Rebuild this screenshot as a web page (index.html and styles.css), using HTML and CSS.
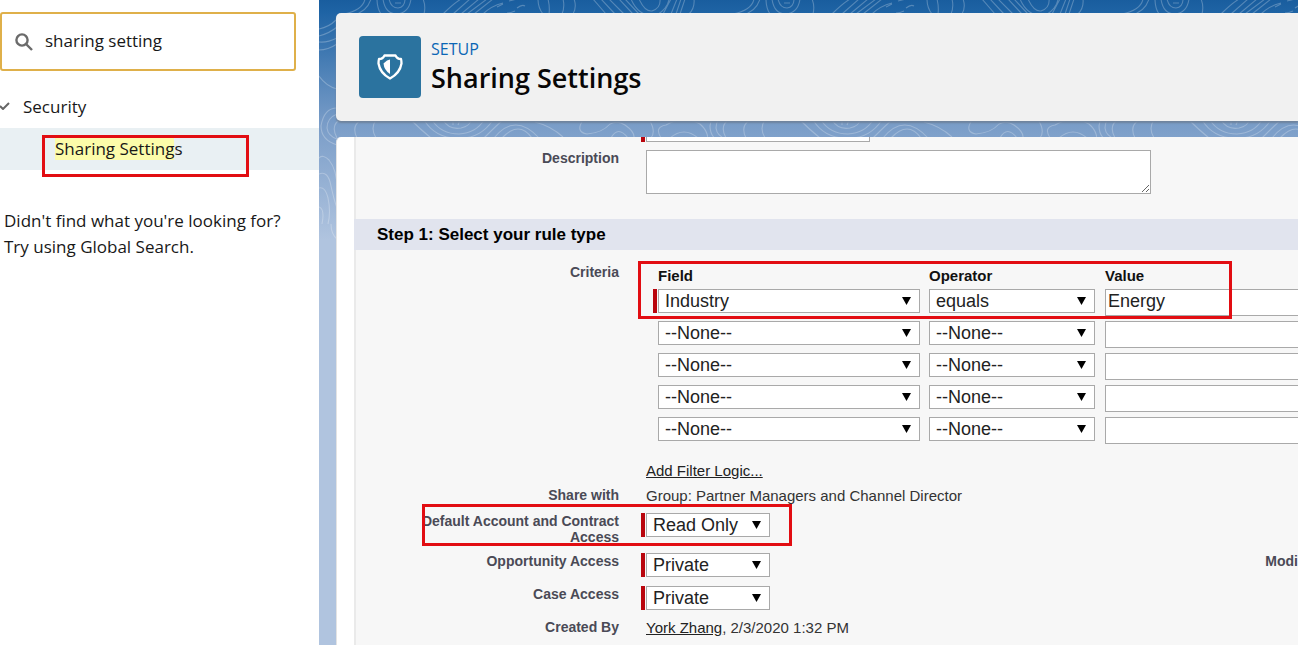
FILE: index.html
```html
<!DOCTYPE html>
<html lang="en">
<head>
<meta charset="utf-8">
<title>Sharing Settings</title>
<link rel="stylesheet" href="styles.css">
</head>
<body>
<div class="app">
  <aside class="sidebar">
    <label class="search">
      <svg class="search-icon" viewBox="0 0 18 18" aria-hidden="true"><circle cx="7" cy="7" r="5.6"/><path d="M11 11l6 6"/></svg>
      <input class="search-input" type="text" value="sharing setting" aria-label="Quick find">
    </label>
    <nav class="tree">
      <button class="tree-group" type="button">
        <svg class="chevron" viewBox="0 0 10 8" aria-hidden="true"><path d="M0 4l3 3 6-6"/></svg>Security
      </button>
      <div class="tree-item">
        <a class="tree-link" href="#"><mark>Sharing Setting</mark>s</a>
        <span class="callout callout-nav"></span>
      </div>
    </nav>
    <p class="hint">Didn't find what you're looking for?<br>Try using Global Search.</p>
  </aside>

  <main class="main">
    <svg class="contours" aria-hidden="true">
      <defs>
        <pattern id="topo" width="389" height="260" patternUnits="userSpaceOnUse">
          <g fill="none" stroke="#fff" stroke-width="1.1">
            <path d="M25 14Q44 10 46-1M34 15Q48 12 52-1M58-1Q58 8 62 14M64-1Q66 14 78 14 90 13 92-1M70-1Q72 8 79 8 86 7 86-1M76 3h6M104-1Q107 6 105 14"/>
            <path d="M124 14Q134 4 142-1M134 14L151-1M142 14L160-1M148 14L168-1M155 14L174-1M164 14Q172 6 184 3M178 7l6-3M190 1l8-2M188 13q4 0 8-2M198 8q5-4 8-2M219-1Q219 8 224 14M229-1Q231 7 230 14M244-1Q246 7 243 14M255-1Q258 7 254 14"/>
            <path d="M274-1L287 14M282-1L296 14M290-1L305 14M300-1L314 14M306-1L320 14M312-1Q320 18 338 15 349 8 350-1M320-1Q326 12 333 11 342 8 341-1M352-1L344 14M358-1L352 14M362-1L357 14M366-1L361 14M375-1Q376 8 370 14"/>
            <path d="M0 29Q10 27 17 20M0 36Q11 33 18 27M0 42Q8 43 18 38M0 50Q9 50 18 44M0 76Q7 86 18 89M18 108Q5 108 2 126 2 140 18 145M18 114Q8 118 8 128 9 136 18 139M0 158Q4 154 10 160 18 170 18 188M0 174Q9 170 12 186 15 200 18 208M0 188Q6 186 9 198 12 212 9 224M0 207Q6 209 3 224M12 224Q12 234 18 239"/>
            <path d="M18 138Q12 127 19 121M38 138Q32 126 42 120M57 138Q51 128 57 120M92 120Q101 129 112 138M105 120Q117 139 140 138 161 139 174 120M113 120Q122 134 140 134 157 133 165 120M124 120Q130 130 142 128 151 126 152 120M134 120v5M141 120l-2 5M175 138Q196 112 220 138M183 138Q200 120 213 138M165 138Q179 124 184 120M216 122Q232 126 244 137M264 120Q256 132 268 134 283 133 291 124 299 120 306 125 316 132 315 138M292 138Q299 125 309 138M342 138Q335 127 347 125 364 115 381 124 388 130 389 138M351 138Q365 126 379 138M331 121Q337 132 332 138"/>
          </g>
        </pattern>
      </defs>
      <rect width="100%" height="260" fill="url(#topo)"/>
    </svg>

    <header class="page-header">
      <span class="page-icon">
        <svg viewBox="0 0 28 28" aria-hidden="true"><path class="shield-line" d="M8.500 2.500h11q1.500 3.500 5.500 3.500.5 2 .5 4.500Q24 20 14 25.500 4 20 2.500 10.500q0-2.500.5-4.500 4 0 5.500-3.500z"/><path class="shield-fill" d="M14 6.500v14.500Q8 17 7.500 10.500L11 7.500z"/></svg>
      </span>
      <div>
        <div class="eyebrow">SETUP</div>
        <h1 class="title">Sharing Settings</h1>
      </div>
    </header>

    <section class="panel">
      <form class="form">
        <div class="row row-name">
          <span></span>
          <span class="required"><input class="text-input name-input" type="text" aria-label="Rule name"></span>
        </div>
        <div class="row row-description">
          <label class="label" for="desc">Description</label>
          <div><textarea class="description" id="desc"></textarea></div>
        </div>

        <h2 class="step">Step 1: Select your rule type</h2>

        <div class="row">
          <span class="label">Criteria</span>
          <div class="criteria">
            <table class="criteria-table">
              <colgroup><col class="col-field"><col class="col-operator"><col></colgroup>
              <thead><tr><th>Field</th><th>Operator</th><th>Value</th></tr></thead>
              <tbody>
                <tr>
                  <td><span class="select wide required"><select aria-label="Field 1"><option>Industry</option></select></span></td>
                  <td><span class="select wide"><select aria-label="Operator 1"><option>equals</option></select></span></td>
                  <td><input class="text-input" type="text" value="Energy" aria-label="Value 1"></td>
                </tr>
                <tr>
                  <td><span class="select wide"><select aria-label="Field 2"><option>--None--</option></select></span></td>
                  <td><span class="select wide"><select aria-label="Operator 2"><option>--None--</option></select></span></td>
                  <td><input class="text-input" type="text" aria-label="Value 2"></td>
                </tr>
                <tr>
                  <td><span class="select wide"><select aria-label="Field 3"><option>--None--</option></select></span></td>
                  <td><span class="select wide"><select aria-label="Operator 3"><option>--None--</option></select></span></td>
                  <td><input class="text-input" type="text" aria-label="Value 3"></td>
                </tr>
                <tr>
                  <td><span class="select wide"><select aria-label="Field 4"><option>--None--</option></select></span></td>
                  <td><span class="select wide"><select aria-label="Operator 4"><option>--None--</option></select></span></td>
                  <td><input class="text-input" type="text" aria-label="Value 4"></td>
                </tr>
                <tr>
                  <td><span class="select wide"><select aria-label="Field 5"><option>--None--</option></select></span></td>
                  <td><span class="select wide"><select aria-label="Operator 5"><option>--None--</option></select></span></td>
                  <td><input class="text-input" type="text" aria-label="Value 5"></td>
                </tr>
              </tbody>
            </table>
            <span class="callout callout-criteria"></span>
            <a class="link" href="#">Add Filter Logic...</a>
          </div>
        </div>

        <div class="row">
          <span class="label">Share with</span>
          <span class="value">Group: Partner Managers and Channel Director</span>
        </div>
        <div class="row">
          <label class="label" for="account">Default Account and Contract Access</label>
          <div><span class="select required"><select id="account"><option>Read Only</option></select></span></div>
          <span class="callout callout-access"></span>
        </div>
        <div class="row">
          <label class="label" for="opportunity">Opportunity Access</label>
          <div class="split"><span class="select required"><select id="opportunity"><option>Private</option></select></span><span class="label">Modi</span></div>
        </div>
        <div class="row">
          <label class="label" for="case">Case Access</label>
          <div><span class="select required"><select id="case"><option>Private</option></select></span></div>
        </div>
        <div class="row">
          <span class="label">Created By</span>
          <span class="value"><a class="link" href="#">York Zhang</a>, 2/3/2020 1:32 PM</span>
        </div>
      </form>
    </section>
  </main>
</div>
</body>
</html>
```
FILE: styles.css
```css
* { box-sizing: border-box; }

body {
  margin: 0;
  font-family: "Liberation Sans", Arial, sans-serif;
  font-size: 15px;
  color: #222;
}

.app {
  display: flex;
  height: 100vh;
  overflow: hidden;
}

/* Sidebar */
.sidebar {
  flex: 0 0 319px;
  padding-top: 12px;
  background: #fff;
  font-family: "Open Sans", sans-serif;
  font-size: 17px;
  color: #181818;
}

.search {
  display: flex;
  align-items: center;
  gap: 12px;
  height: 59px;
  margin-right: 23px;
  padding-left: 13px;
  border: 2px solid #dfb04a;
  border-radius: 3px;
}

.search-icon {
  flex: none;
  width: 18px;
  height: 18px;
  fill: none;
  stroke: #6b6b6b;
  stroke-width: 2.400;
}

.search-input {
  flex: 1;
  min-width: 0;
  padding: 0 0 2px;
  border: 0;
  outline: 0;
  background: none;
  font: inherit;
  color: inherit;
}

.tree { padding-top: 23px; }

.tree-group {
  display: flex;
  align-items: center;
  gap: 13px;
  height: 24px;
  margin-bottom: 10px;
  padding: 0;
  border: 0;
  background: none;
  font: inherit;
  color: inherit;
}

.chevron {
  width: 10px;
  height: 8px;
  fill: none;
  stroke: #666;
  stroke-width: 2;
}

.tree-item {
  position: relative;
  height: 42px;
  padding-left: 55px;
  background: #e9f0f3;
  line-height: 42px;
}

.tree-link {
  color: inherit;
  text-decoration: none;
}

.tree-link mark {
  background: #fcfcaa;
  color: inherit;
}

.hint {
  margin: 38px 0 0 4px;
  line-height: 26px;
}

/* Red outlines laid over the page */
.callout {
  position: absolute;
  border: 3px solid #e20d12;
  pointer-events: none;
}

.callout-nav { top: 7px; left: 42px; width: 207px; height: 42px; }
.callout-criteria { top: -3px; left: -8px; width: 594px; height: 58px; }
.callout-access { top: -9px; left: 66px; width: 370px; height: 42px; }

/* Main area */
.main {
  position: relative;
  display: flex;
  flex: 1;
  flex-direction: column;
  gap: 16px;
  min-width: 0;
  padding: 13px 0 0 17px;
  background: linear-gradient(#195d9e, #1f64a5 13px, #7a9dc8 125px, #b0c4df 240px);
}

.contours {
  position: absolute;
  top: 0;
  left: 0;
  width: 100%;
  height: 260px;
  opacity: 0.25;
}

.page-header {
  position: relative;
  display: flex;
  gap: 10px;
  height: 108px;
  padding: 23px 0 0 23px;
  border-radius: 5px 0 0 5px;
  background: #f1f1f1;
  box-shadow: 0 2px 2px #6f839c;
}

.page-icon {
  display: grid;
  place-items: center;
  width: 62px;
  height: 62px;
  border-radius: 4px;
  background: #2b739f;
}

.page-icon svg { width: 28px; height: 28px; }
.shield-line { fill: none; stroke: #fff; stroke-width: 2.300; stroke-linejoin: round; }
.shield-fill { fill: #fff; }

.eyebrow {
  padding-top: 3px;
  font: 16px/20px "Open Sans", sans-serif;
  color: #0b66b5;
}

.title {
  margin: 0;
  font: 600 27px/38px "Open Sans", sans-serif;
  color: #080707;
}

.panel {
  position: relative;
  flex: 1;
  min-height: 0;
  padding-left: 17px;
  overflow: hidden;
  border-left: 1px solid #e3e3e3;
  border-radius: 5px 0 0 0;
  background: #fff;
}

.form {
  min-height: 120%;
  margin-top: -22px;
  border-left: 2px solid #eaeaea;
  background: #f7f7f7;
}

.row {
  position: relative;
  display: grid;
  grid-template-columns: 263px minmax(0, 1fr);
  column-gap: 27px;
  margin-bottom: 8px;
}

.label {
  font-size: 14px;
  font-weight: bold;
  line-height: 16px;
  text-align: right;
  color: #4a4a56;
}

.row > .label { padding-left: 60px; }

.value { line-height: 18px; color: #333; }

.link { color: #222; text-decoration: underline; }

.required {
  border-left: 4px solid #b9050d;
  margin-left: -5px;
  padding-left: 1px;
}

.row-name { height: 27px; }
.name-input { width: 224px; }
.row-description { margin-bottom: 25px; }

.text-input {
  display: block;
  height: 27px;
  padding: 0 2px 2px;
  border: 1px solid #a9a9a9;
  background: #fff;
  font: 18px "Liberation Sans", Arial, sans-serif;
  color: #222;
}

.description {
  display: block;
  width: 505px;
  height: 44px;
  border: 1px solid #a9a9a9;
  background: #fff;
  font: inherit;
}

.step {
  margin: 0 0 14px -2px;
  padding-left: 23px;
  background: #e1e4ee;
  font-size: 17px;
  line-height: 31px;
  color: #000;
}

.criteria { position: relative; }

.criteria-table {
  width: 100%;
  margin-bottom: 13px;
  table-layout: fixed;
  border-collapse: collapse;
}

.col-field { width: 283px; }
.col-operator { width: 176px; }

.criteria-table th {
  height: 25px;
  padding: 0 0 2px;
  font-size: 15px;
  line-height: 23px;
  text-align: left;
  color: #111;
}

.criteria-table td {
  height: 32px;
  padding: 0;
  vertical-align: top;
}

.criteria-table th:first-child,
.criteria-table td:first-child { padding-left: 12px; }

.criteria-table .text-input { width: 100%; border-right: 0; }

.select {
  position: relative;
  display: block;
  width: 124px;
  height: 24px;
  margin-bottom: 1px;
}

.select.wide { width: auto; margin-right: 10px; }
.select.required { width: 129px; }
.select.wide.required { width: auto; }
td:first-child .select.wide { margin-right: 9px; }

.select select {
  width: 100%;
  height: 24px;
  display: block;
  padding: 0 0 0 6px;
  border: 1px solid #a9a9a9;
  border-radius: 0;
  appearance: none;
  background: #fff;
  font: 18px "Liberation Sans", Arial, sans-serif;
  color: #222;
}

.select::after {
  content: "";
  position: absolute;
  top: 8px;
  right: 9px;
  width: 9px;
  height: 8px;
  background: #000;
  clip-path: polygon(0 0, 100% 0, 50% 100%);
  pointer-events: none;
}

.split { display: flex; justify-content: space-between; }
```
